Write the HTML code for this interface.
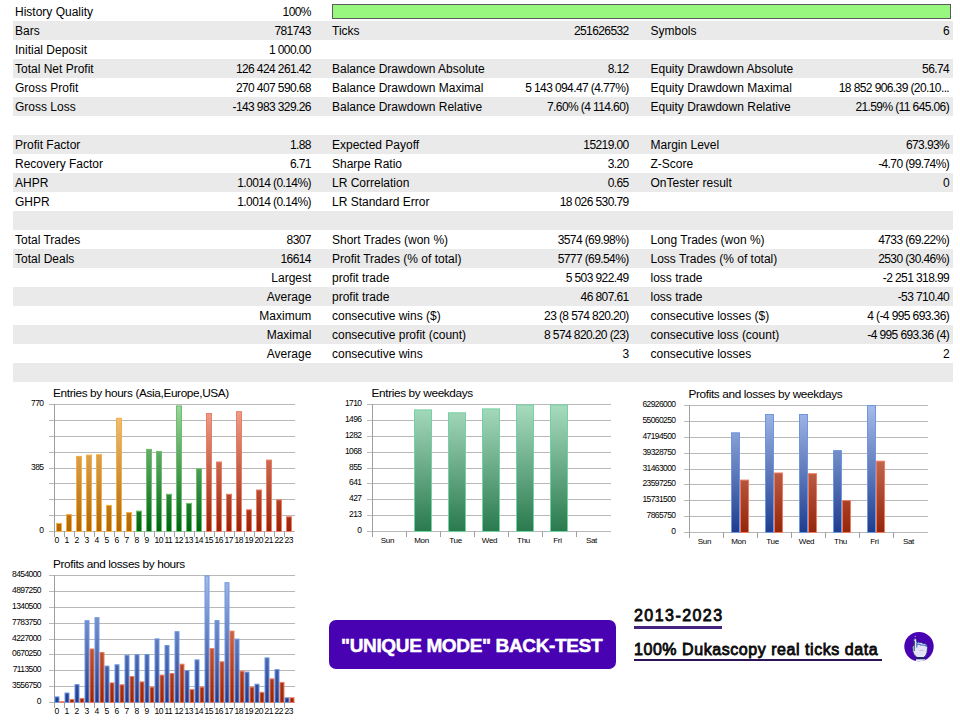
<!DOCTYPE html>
<html><head><meta charset="utf-8"><style>
html,body{margin:0;padding:0;background:#fff;}
body{width:960px;height:720px;position:relative;overflow:hidden;font-family:"Liberation Sans",sans-serif;color:#000;}
.r{position:absolute;left:13px;width:940px;height:19px;}
.g{background:#eaeaea;}
.l,.v{position:absolute;top:0;height:19px;line-height:19px;font-size:12px;white-space:nowrap;}
.v{letter-spacing:-0.6px;}
.w{letter-spacing:0;}
svg{position:absolute;left:0;top:0;}
</style></head><body>

<div class="r" style="top:2px"></div>
<div class="r g" style="top:21px"></div>
<div class="r" style="top:40px"></div>
<div class="r g" style="top:59px"></div>
<div class="r" style="top:78px"></div>
<div class="r g" style="top:97px"></div>
<div class="r" style="top:116px"></div>
<div class="r g" style="top:135px"></div>
<div class="r" style="top:154px"></div>
<div class="r g" style="top:173px"></div>
<div class="r" style="top:192px"></div>
<div class="r g" style="top:211px"></div>
<div class="r" style="top:230px"></div>
<div class="r g" style="top:249px"></div>
<div class="r" style="top:268px"></div>
<div class="r g" style="top:287px"></div>
<div class="r" style="top:306px"></div>
<div class="r g" style="top:325px"></div>
<div class="r" style="top:344px"></div>
<div class="r g" style="top:363px"></div>
<div class="l" style="top:3px;left:15px">History Quality</div>
<div class="v" style="top:3px;right:649.1px">100%</div>
<div class="l" style="top:22px;left:15px">Bars</div>
<div class="v" style="top:22px;right:649.1px">781743</div>
<div class="l" style="top:22px;left:332px">Ticks</div>
<div class="v" style="top:22px;right:331.4px">251626532</div>
<div class="l" style="top:22px;left:650.5px">Symbols</div>
<div class="v" style="top:22px;right:10.9px">6</div>
<div class="l" style="top:41px;left:15px">Initial Deposit</div>
<div class="v" style="top:41px;right:649.1px">1 000.00</div>
<div class="l" style="top:60px;left:15px">Total Net Profit</div>
<div class="v" style="top:60px;right:649.1px">126 424 261.42</div>
<div class="l" style="top:60px;left:332px">Balance Drawdown Absolute</div>
<div class="v" style="top:60px;right:331.4px">8.12</div>
<div class="l" style="top:60px;left:650.5px">Equity Drawdown Absolute</div>
<div class="v" style="top:60px;right:10.9px">56.74</div>
<div class="l" style="top:79px;left:15px">Gross Profit</div>
<div class="v" style="top:79px;right:649.1px">270 407 590.68</div>
<div class="l" style="top:79px;left:332px">Balance Drawdown Maximal</div>
<div class="v" style="top:79px;right:331.4px">5 143 094.47 (4.77%)</div>
<div class="l" style="top:79px;left:650.5px">Equity Drawdown Maximal</div>
<div class="v" style="top:79px;right:10.9px">18 852 906.39 (20.10...</div>
<div class="l" style="top:98px;left:15px">Gross Loss</div>
<div class="v" style="top:98px;right:649.1px">-143 983 329.26</div>
<div class="l" style="top:98px;left:332px">Balance Drawdown Relative</div>
<div class="v" style="top:98px;right:331.4px">7.60% (4 114.60)</div>
<div class="l" style="top:98px;left:650.5px">Equity Drawdown Relative</div>
<div class="v" style="top:98px;right:10.9px">21.59% (11 645.06)</div>
<div class="l" style="top:136px;left:15px">Profit Factor</div>
<div class="v" style="top:136px;right:649.1px">1.88</div>
<div class="l" style="top:136px;left:332px">Expected Payoff</div>
<div class="v" style="top:136px;right:331.4px">15219.00</div>
<div class="l" style="top:136px;left:650.5px">Margin Level</div>
<div class="v" style="top:136px;right:10.9px">673.93%</div>
<div class="l" style="top:155px;left:15px">Recovery Factor</div>
<div class="v" style="top:155px;right:649.1px">6.71</div>
<div class="l" style="top:155px;left:332px">Sharpe Ratio</div>
<div class="v" style="top:155px;right:331.4px">3.20</div>
<div class="l" style="top:155px;left:650.5px">Z-Score</div>
<div class="v" style="top:155px;right:10.9px">-4.70 (99.74%)</div>
<div class="l" style="top:174px;left:15px">AHPR</div>
<div class="v" style="top:174px;right:649.1px">1.0014 (0.14%)</div>
<div class="l" style="top:174px;left:332px">LR Correlation</div>
<div class="v" style="top:174px;right:331.4px">0.65</div>
<div class="l" style="top:174px;left:650.5px">OnTester result</div>
<div class="v" style="top:174px;right:10.9px">0</div>
<div class="l" style="top:193px;left:15px">GHPR</div>
<div class="v" style="top:193px;right:649.1px">1.0014 (0.14%)</div>
<div class="l" style="top:193px;left:332px">LR Standard Error</div>
<div class="v" style="top:193px;right:331.4px">18 026 530.79</div>
<div class="l" style="top:231px;left:15px">Total Trades</div>
<div class="v" style="top:231px;right:649.1px">8307</div>
<div class="l" style="top:231px;left:332px">Short Trades (won %)</div>
<div class="v" style="top:231px;right:331.4px">3574 (69.98%)</div>
<div class="l" style="top:231px;left:650.5px">Long Trades (won %)</div>
<div class="v" style="top:231px;right:10.9px">4733 (69.22%)</div>
<div class="l" style="top:250px;left:15px">Total Deals</div>
<div class="v" style="top:250px;right:649.1px">16614</div>
<div class="l" style="top:250px;left:332px">Profit Trades (% of total)</div>
<div class="v" style="top:250px;right:331.4px">5777 (69.54%)</div>
<div class="l" style="top:250px;left:650.5px">Loss Trades (% of total)</div>
<div class="v" style="top:250px;right:10.9px">2530 (30.46%)</div>
<div class="l" style="top:269px;right:648.7px">Largest</div>
<div class="l" style="top:269px;left:332px">profit trade</div>
<div class="v" style="top:269px;right:331.4px">5 503 922.49</div>
<div class="l" style="top:269px;left:650.5px">loss trade</div>
<div class="v" style="top:269px;right:10.9px">-2 251 318.99</div>
<div class="l" style="top:288px;right:648.7px">Average</div>
<div class="l" style="top:288px;left:332px">profit trade</div>
<div class="v" style="top:288px;right:331.4px">46 807.61</div>
<div class="l" style="top:288px;left:650.5px">loss trade</div>
<div class="v" style="top:288px;right:10.9px">-53 710.40</div>
<div class="l" style="top:307px;right:648.7px">Maximum</div>
<div class="l" style="top:307px;left:332px">consecutive wins ($)</div>
<div class="v" style="top:307px;right:331.4px">23 (8 574 820.20)</div>
<div class="l" style="top:307px;left:650.5px">consecutive losses ($)</div>
<div class="v" style="top:307px;right:10.9px">4 (-4 995 693.36)</div>
<div class="l" style="top:326px;right:648.7px">Maximal</div>
<div class="l" style="top:326px;left:332px">consecutive profit (count)</div>
<div class="v" style="top:326px;right:331.4px">8 574 820.20 (23)</div>
<div class="l" style="top:326px;left:650.5px">consecutive loss (count)</div>
<div class="v" style="top:326px;right:10.9px">-4 995 693.36 (4)</div>
<div class="l" style="top:345px;right:648.7px">Average</div>
<div class="l" style="top:345px;left:332px">consecutive wins</div>
<div class="v" style="top:345px;right:331.4px">3</div>
<div class="l" style="top:345px;left:650.5px">consecutive losses</div>
<div class="v" style="top:345px;right:10.9px">2</div>
<div style="position:absolute;left:332px;top:4px;width:617px;height:13px;border:1px solid #5b5b5b;background:#98f77e"></div>
<svg width="960" height="720" viewBox="0 0 960 720" style="font-family:'Liberation Sans',sans-serif">
<defs>
<linearGradient id="gO" gradientUnits="userSpaceOnUse" x1="0" y1="404" x2="0" y2="531"><stop offset="0" stop-color="#f2c98a"/><stop offset="1" stop-color="#ad6808"/></linearGradient>
<linearGradient id="gG" gradientUnits="userSpaceOnUse" x1="0" y1="404" x2="0" y2="531"><stop offset="0" stop-color="#9fd69f"/><stop offset="1" stop-color="#006414"/></linearGradient>
<linearGradient id="gR" gradientUnits="userSpaceOnUse" x1="0" y1="404" x2="0" y2="531"><stop offset="0" stop-color="#f0a694"/><stop offset="1" stop-color="#962408"/></linearGradient>
<linearGradient id="gT" gradientUnits="userSpaceOnUse" x1="0" y1="404" x2="0" y2="531"><stop offset="0" stop-color="#a9dcc0"/><stop offset="1" stop-color="#2a7a4e"/></linearGradient>
<linearGradient id="gB3" gradientUnits="userSpaceOnUse" x1="0" y1="405" x2="0" y2="532"><stop offset="0" stop-color="#a6bceb"/><stop offset="1" stop-color="#1f3d8f"/></linearGradient>
<linearGradient id="gR3" gradientUnits="userSpaceOnUse" x1="0" y1="405" x2="0" y2="532"><stop offset="0" stop-color="#e49a86"/><stop offset="1" stop-color="#94260a"/></linearGradient>
<linearGradient id="gB4" gradientUnits="userSpaceOnUse" x1="0" y1="575" x2="0" y2="702"><stop offset="0" stop-color="#a6bceb"/><stop offset="1" stop-color="#1f3d8f"/></linearGradient>
<linearGradient id="gR4" gradientUnits="userSpaceOnUse" x1="0" y1="575" x2="0" y2="702"><stop offset="0" stop-color="#e49a86"/><stop offset="1" stop-color="#94260a"/></linearGradient>
<clipPath id="clip4"><rect x="12.5" y="560" width="300" height="160"/></clipPath>
</defs>
<text x="53" y="396.5" font-size="11.8" letter-spacing="-0.36" fill="#000">Entries by hours (Asia,Europe,USA)</text>
<line x1="49" y1="404.5" x2="295" y2="404.5" stroke="#b8b8b8" stroke-width="1"/>
<line x1="49" y1="420.5" x2="295" y2="420.5" stroke="#b8b8b8" stroke-width="1"/>
<line x1="49" y1="436.5" x2="295" y2="436.5" stroke="#b8b8b8" stroke-width="1"/>
<line x1="49" y1="452.5" x2="295" y2="452.5" stroke="#b8b8b8" stroke-width="1"/>
<line x1="49" y1="468.5" x2="295" y2="468.5" stroke="#b8b8b8" stroke-width="1"/>
<line x1="49" y1="483.5" x2="295" y2="483.5" stroke="#b8b8b8" stroke-width="1"/>
<line x1="49" y1="499.5" x2="295" y2="499.5" stroke="#b8b8b8" stroke-width="1"/>
<line x1="49" y1="515.5" x2="295" y2="515.5" stroke="#b8b8b8" stroke-width="1"/>
<line x1="49" y1="531.5" x2="295" y2="531.5" stroke="#b8b8b8" stroke-width="1"/>
<line x1="54.5" y1="404" x2="54.5" y2="537" stroke="#a0a0a0" stroke-width="1"/>
<line x1="64.5" y1="531" x2="64.5" y2="537" stroke="#a0a0a0" stroke-width="1"/>
<line x1="74.5" y1="531" x2="74.5" y2="537" stroke="#a0a0a0" stroke-width="1"/>
<line x1="84.5" y1="531" x2="84.5" y2="537" stroke="#a0a0a0" stroke-width="1"/>
<line x1="94.5" y1="531" x2="94.5" y2="537" stroke="#a0a0a0" stroke-width="1"/>
<line x1="104.5" y1="531" x2="104.5" y2="537" stroke="#a0a0a0" stroke-width="1"/>
<line x1="114.5" y1="531" x2="114.5" y2="537" stroke="#a0a0a0" stroke-width="1"/>
<line x1="124.5" y1="531" x2="124.5" y2="537" stroke="#a0a0a0" stroke-width="1"/>
<line x1="134.5" y1="531" x2="134.5" y2="537" stroke="#a0a0a0" stroke-width="1"/>
<line x1="144.5" y1="531" x2="144.5" y2="537" stroke="#a0a0a0" stroke-width="1"/>
<line x1="154.5" y1="531" x2="154.5" y2="537" stroke="#a0a0a0" stroke-width="1"/>
<line x1="164.5" y1="531" x2="164.5" y2="537" stroke="#a0a0a0" stroke-width="1"/>
<line x1="174.5" y1="531" x2="174.5" y2="537" stroke="#a0a0a0" stroke-width="1"/>
<line x1="184.5" y1="531" x2="184.5" y2="537" stroke="#a0a0a0" stroke-width="1"/>
<line x1="194.5" y1="531" x2="194.5" y2="537" stroke="#a0a0a0" stroke-width="1"/>
<line x1="204.5" y1="531" x2="204.5" y2="537" stroke="#a0a0a0" stroke-width="1"/>
<line x1="214.5" y1="531" x2="214.5" y2="537" stroke="#a0a0a0" stroke-width="1"/>
<line x1="224.5" y1="531" x2="224.5" y2="537" stroke="#a0a0a0" stroke-width="1"/>
<line x1="234.5" y1="531" x2="234.5" y2="537" stroke="#a0a0a0" stroke-width="1"/>
<line x1="244.5" y1="531" x2="244.5" y2="537" stroke="#a0a0a0" stroke-width="1"/>
<line x1="254.5" y1="531" x2="254.5" y2="537" stroke="#a0a0a0" stroke-width="1"/>
<line x1="264.5" y1="531" x2="264.5" y2="537" stroke="#a0a0a0" stroke-width="1"/>
<line x1="274.5" y1="531" x2="274.5" y2="537" stroke="#a0a0a0" stroke-width="1"/>
<line x1="284.5" y1="531" x2="284.5" y2="537" stroke="#a0a0a0" stroke-width="1"/>
<g>
<text x="43.5" y="406.0" font-size="8.5" letter-spacing="-0.6" text-anchor="end" fill="#000">770</text>
<text x="43.5" y="422.0" font-size="8.5" letter-spacing="-0.6" text-anchor="end" fill="#000"></text>
<text x="43.5" y="438.0" font-size="8.5" letter-spacing="-0.6" text-anchor="end" fill="#000"></text>
<text x="43.5" y="454.0" font-size="8.5" letter-spacing="-0.6" text-anchor="end" fill="#000"></text>
<text x="43.5" y="470.0" font-size="8.5" letter-spacing="-0.6" text-anchor="end" fill="#000">385</text>
<text x="43.5" y="485.0" font-size="8.5" letter-spacing="-0.6" text-anchor="end" fill="#000"></text>
<text x="43.5" y="501.0" font-size="8.5" letter-spacing="-0.6" text-anchor="end" fill="#000"></text>
<text x="43.5" y="517.0" font-size="8.5" letter-spacing="-0.6" text-anchor="end" fill="#000"></text>
<text x="43.5" y="533.0" font-size="8.5" letter-spacing="-0.6" text-anchor="end" fill="#000">0</text>
</g>
<rect x="56.5" y="523.5" width="5" height="8.0" fill="url(#gO)" stroke="#f9ad3e" stroke-width="1"/>
<rect x="66.5" y="514.6" width="5" height="16.9" fill="url(#gO)" stroke="#f9ad3e" stroke-width="1"/>
<rect x="76.5" y="456.4" width="5" height="75.1" fill="url(#gO)" stroke="#f9ad3e" stroke-width="1"/>
<rect x="86.5" y="455.1" width="5" height="76.4" fill="url(#gO)" stroke="#f9ad3e" stroke-width="1"/>
<rect x="96.5" y="454.7" width="5" height="76.8" fill="url(#gO)" stroke="#f9ad3e" stroke-width="1"/>
<rect x="106.5" y="505.4" width="5" height="26.1" fill="url(#gO)" stroke="#f9ad3e" stroke-width="1"/>
<rect x="116.5" y="418.3" width="5" height="113.2" fill="url(#gO)" stroke="#f9ad3e" stroke-width="1"/>
<rect x="126.5" y="512.6" width="5" height="18.9" fill="url(#gO)" stroke="#f9ad3e" stroke-width="1"/>
<rect x="136.5" y="511.1" width="5" height="20.4" fill="url(#gG)" stroke="#6cc06c" stroke-width="1"/>
<rect x="146.5" y="449.4" width="5" height="82.1" fill="url(#gG)" stroke="#6cc06c" stroke-width="1"/>
<rect x="156.5" y="451.4" width="5" height="80.1" fill="url(#gG)" stroke="#6cc06c" stroke-width="1"/>
<rect x="166.5" y="494.3" width="5" height="37.2" fill="url(#gG)" stroke="#6cc06c" stroke-width="1"/>
<rect x="176.5" y="405.9" width="5" height="125.6" fill="url(#gG)" stroke="#6cc06c" stroke-width="1"/>
<rect x="186.5" y="503.4" width="5" height="28.1" fill="url(#gG)" stroke="#6cc06c" stroke-width="1"/>
<rect x="196.5" y="468.8" width="5" height="62.7" fill="url(#gG)" stroke="#6cc06c" stroke-width="1"/>
<rect x="206.5" y="413.5" width="5" height="118.0" fill="url(#gR)" stroke="#ee7b62" stroke-width="1"/>
<rect x="216.5" y="462.0" width="5" height="69.5" fill="url(#gR)" stroke="#ee7b62" stroke-width="1"/>
<rect x="226.5" y="494.3" width="5" height="37.2" fill="url(#gR)" stroke="#ee7b62" stroke-width="1"/>
<rect x="236.5" y="411.7" width="5" height="119.8" fill="url(#gR)" stroke="#ee7b62" stroke-width="1"/>
<rect x="246.5" y="509.8" width="5" height="21.7" fill="url(#gR)" stroke="#ee7b62" stroke-width="1"/>
<rect x="256.5" y="490.0" width="5" height="41.5" fill="url(#gR)" stroke="#ee7b62" stroke-width="1"/>
<rect x="266.5" y="460.1" width="5" height="71.4" fill="url(#gR)" stroke="#ee7b62" stroke-width="1"/>
<rect x="276.5" y="499.9" width="5" height="31.6" fill="url(#gR)" stroke="#ee7b62" stroke-width="1"/>
<rect x="286.5" y="516.8" width="5" height="14.7" fill="url(#gR)" stroke="#ee7b62" stroke-width="1"/>
<text x="54.6" y="542.8" font-size="8.5" letter-spacing="-0.6" fill="#000">0</text>
<text x="64.6" y="542.8" font-size="8.5" letter-spacing="-0.6" fill="#000">1</text>
<text x="74.6" y="542.8" font-size="8.5" letter-spacing="-0.6" fill="#000">2</text>
<text x="84.6" y="542.8" font-size="8.5" letter-spacing="-0.6" fill="#000">3</text>
<text x="94.6" y="542.8" font-size="8.5" letter-spacing="-0.6" fill="#000">4</text>
<text x="104.6" y="542.8" font-size="8.5" letter-spacing="-0.6" fill="#000">5</text>
<text x="114.6" y="542.8" font-size="8.5" letter-spacing="-0.6" fill="#000">6</text>
<text x="124.6" y="542.8" font-size="8.5" letter-spacing="-0.6" fill="#000">7</text>
<text x="134.6" y="542.8" font-size="8.5" letter-spacing="-0.6" fill="#000">8</text>
<text x="144.6" y="542.8" font-size="8.5" letter-spacing="-0.6" fill="#000">9</text>
<text x="154.6" y="542.8" font-size="8.5" letter-spacing="-0.6" fill="#000">10</text>
<text x="164.6" y="542.8" font-size="8.5" letter-spacing="-0.6" fill="#000">11</text>
<text x="174.6" y="542.8" font-size="8.5" letter-spacing="-0.6" fill="#000">12</text>
<text x="184.6" y="542.8" font-size="8.5" letter-spacing="-0.6" fill="#000">13</text>
<text x="194.6" y="542.8" font-size="8.5" letter-spacing="-0.6" fill="#000">14</text>
<text x="204.6" y="542.8" font-size="8.5" letter-spacing="-0.6" fill="#000">15</text>
<text x="214.6" y="542.8" font-size="8.5" letter-spacing="-0.6" fill="#000">16</text>
<text x="224.6" y="542.8" font-size="8.5" letter-spacing="-0.6" fill="#000">17</text>
<text x="234.6" y="542.8" font-size="8.5" letter-spacing="-0.6" fill="#000">18</text>
<text x="244.6" y="542.8" font-size="8.5" letter-spacing="-0.6" fill="#000">19</text>
<text x="254.6" y="542.8" font-size="8.5" letter-spacing="-0.6" fill="#000">20</text>
<text x="264.6" y="542.8" font-size="8.5" letter-spacing="-0.6" fill="#000">21</text>
<text x="274.6" y="542.8" font-size="8.5" letter-spacing="-0.6" fill="#000">22</text>
<text x="284.6" y="542.8" font-size="8.5" letter-spacing="-0.6" fill="#000">23</text>
<text x="371.5" y="396.5" font-size="11.8" letter-spacing="-0.36" fill="#000">Entries by weekdays</text>
<line x1="367" y1="404.5" x2="611" y2="404.5" stroke="#b8b8b8" stroke-width="1"/>
<line x1="367" y1="420.5" x2="611" y2="420.5" stroke="#b8b8b8" stroke-width="1"/>
<line x1="367" y1="436.5" x2="611" y2="436.5" stroke="#b8b8b8" stroke-width="1"/>
<line x1="367" y1="452.5" x2="611" y2="452.5" stroke="#b8b8b8" stroke-width="1"/>
<line x1="367" y1="468.5" x2="611" y2="468.5" stroke="#b8b8b8" stroke-width="1"/>
<line x1="367" y1="483.5" x2="611" y2="483.5" stroke="#b8b8b8" stroke-width="1"/>
<line x1="367" y1="499.5" x2="611" y2="499.5" stroke="#b8b8b8" stroke-width="1"/>
<line x1="367" y1="515.5" x2="611" y2="515.5" stroke="#b8b8b8" stroke-width="1"/>
<line x1="367" y1="531.5" x2="611" y2="531.5" stroke="#b8b8b8" stroke-width="1"/>
<line x1="372.5" y1="404" x2="372.5" y2="537" stroke="#a0a0a0" stroke-width="1"/>
<line x1="406.5" y1="531" x2="406.5" y2="537" stroke="#a0a0a0" stroke-width="1"/>
<line x1="440.5" y1="531" x2="440.5" y2="537" stroke="#a0a0a0" stroke-width="1"/>
<line x1="474.5" y1="531" x2="474.5" y2="537" stroke="#a0a0a0" stroke-width="1"/>
<line x1="508.5" y1="531" x2="508.5" y2="537" stroke="#a0a0a0" stroke-width="1"/>
<line x1="542.5" y1="531" x2="542.5" y2="537" stroke="#a0a0a0" stroke-width="1"/>
<line x1="576.5" y1="531" x2="576.5" y2="537" stroke="#a0a0a0" stroke-width="1"/>
<g>
<text x="361.5" y="406.0" font-size="8.5" letter-spacing="-0.6" text-anchor="end" fill="#000">1710</text>
<text x="361.5" y="422.0" font-size="8.5" letter-spacing="-0.6" text-anchor="end" fill="#000">1496</text>
<text x="361.5" y="438.0" font-size="8.5" letter-spacing="-0.6" text-anchor="end" fill="#000">1282</text>
<text x="361.5" y="454.0" font-size="8.5" letter-spacing="-0.6" text-anchor="end" fill="#000">1068</text>
<text x="361.5" y="470.0" font-size="8.5" letter-spacing="-0.6" text-anchor="end" fill="#000">855</text>
<text x="361.5" y="485.0" font-size="8.5" letter-spacing="-0.6" text-anchor="end" fill="#000">641</text>
<text x="361.5" y="501.0" font-size="8.5" letter-spacing="-0.6" text-anchor="end" fill="#000">427</text>
<text x="361.5" y="517.0" font-size="8.5" letter-spacing="-0.6" text-anchor="end" fill="#000">213</text>
<text x="361.5" y="533.0" font-size="8.5" letter-spacing="-0.6" text-anchor="end" fill="#000">0</text>
</g>
<rect x="414.5" y="409.9" width="17" height="121.6" fill="url(#gT)" stroke="#74d2a2" stroke-width="1"/>
<rect x="448.5" y="412.8" width="17" height="118.8" fill="url(#gT)" stroke="#74d2a2" stroke-width="1"/>
<rect x="482.5" y="408.9" width="17" height="122.6" fill="url(#gT)" stroke="#74d2a2" stroke-width="1"/>
<rect x="516.5" y="405.0" width="17" height="126.5" fill="url(#gT)" stroke="#74d2a2" stroke-width="1"/>
<rect x="550.5" y="405.0" width="17" height="126.5" fill="url(#gT)" stroke="#74d2a2" stroke-width="1"/>
<text x="387.5" y="542.8" font-size="8" letter-spacing="-0.3" text-anchor="middle" fill="#000">Sun</text>
<text x="421.5" y="542.8" font-size="8" letter-spacing="-0.3" text-anchor="middle" fill="#000">Mon</text>
<text x="455.5" y="542.8" font-size="8" letter-spacing="-0.3" text-anchor="middle" fill="#000">Tue</text>
<text x="489.5" y="542.8" font-size="8" letter-spacing="-0.3" text-anchor="middle" fill="#000">Wed</text>
<text x="523.5" y="542.8" font-size="8" letter-spacing="-0.3" text-anchor="middle" fill="#000">Thu</text>
<text x="557.5" y="542.8" font-size="8" letter-spacing="-0.3" text-anchor="middle" fill="#000">Fri</text>
<text x="591.5" y="542.8" font-size="8" letter-spacing="-0.3" text-anchor="middle" fill="#000">Sat</text>
<text x="688.5" y="397.7" font-size="11.8" letter-spacing="-0.36" fill="#000">Profits and losses by weekdays</text>
<line x1="684" y1="405.5" x2="928" y2="405.5" stroke="#b8b8b8" stroke-width="1"/>
<line x1="684" y1="421.5" x2="928" y2="421.5" stroke="#b8b8b8" stroke-width="1"/>
<line x1="684" y1="437.5" x2="928" y2="437.5" stroke="#b8b8b8" stroke-width="1"/>
<line x1="684" y1="453.5" x2="928" y2="453.5" stroke="#b8b8b8" stroke-width="1"/>
<line x1="684" y1="469.5" x2="928" y2="469.5" stroke="#b8b8b8" stroke-width="1"/>
<line x1="684" y1="484.5" x2="928" y2="484.5" stroke="#b8b8b8" stroke-width="1"/>
<line x1="684" y1="500.5" x2="928" y2="500.5" stroke="#b8b8b8" stroke-width="1"/>
<line x1="684" y1="516.5" x2="928" y2="516.5" stroke="#b8b8b8" stroke-width="1"/>
<line x1="684" y1="532.5" x2="928" y2="532.5" stroke="#b8b8b8" stroke-width="1"/>
<line x1="689.5" y1="405" x2="689.5" y2="538" stroke="#a0a0a0" stroke-width="1"/>
<line x1="723.5" y1="532" x2="723.5" y2="538" stroke="#a0a0a0" stroke-width="1"/>
<line x1="757.5" y1="532" x2="757.5" y2="538" stroke="#a0a0a0" stroke-width="1"/>
<line x1="791.5" y1="532" x2="791.5" y2="538" stroke="#a0a0a0" stroke-width="1"/>
<line x1="825.5" y1="532" x2="825.5" y2="538" stroke="#a0a0a0" stroke-width="1"/>
<line x1="859.5" y1="532" x2="859.5" y2="538" stroke="#a0a0a0" stroke-width="1"/>
<line x1="893.5" y1="532" x2="893.5" y2="538" stroke="#a0a0a0" stroke-width="1"/>
<g>
<text x="675.5" y="407.0" font-size="8.5" letter-spacing="-0.6" text-anchor="end" fill="#000">62926000</text>
<text x="675.5" y="423.0" font-size="8.5" letter-spacing="-0.6" text-anchor="end" fill="#000">55060250</text>
<text x="675.5" y="439.0" font-size="8.5" letter-spacing="-0.6" text-anchor="end" fill="#000">47194500</text>
<text x="675.5" y="455.0" font-size="8.5" letter-spacing="-0.6" text-anchor="end" fill="#000">39328750</text>
<text x="675.5" y="471.0" font-size="8.5" letter-spacing="-0.6" text-anchor="end" fill="#000">31463000</text>
<text x="675.5" y="486.0" font-size="8.5" letter-spacing="-0.6" text-anchor="end" fill="#000">23597250</text>
<text x="675.5" y="502.0" font-size="8.5" letter-spacing="-0.6" text-anchor="end" fill="#000">15731500</text>
<text x="675.5" y="518.0" font-size="8.5" letter-spacing="-0.6" text-anchor="end" fill="#000">7865750</text>
<text x="675.5" y="534.0" font-size="8.5" letter-spacing="-0.6" text-anchor="end" fill="#000">0</text>
</g>
<rect x="731.5" y="432.8" width="8" height="99.7" fill="url(#gB3)" stroke="#6e97e2" stroke-width="1"/>
<rect x="740.5" y="480.1" width="8" height="52.4" fill="url(#gR3)" stroke="#f07a5c" stroke-width="1"/>
<rect x="765.5" y="414.5" width="8" height="118.0" fill="url(#gB3)" stroke="#6e97e2" stroke-width="1"/>
<rect x="774.5" y="473.0" width="8" height="59.5" fill="url(#gR3)" stroke="#f07a5c" stroke-width="1"/>
<rect x="799.5" y="414.5" width="8" height="118.0" fill="url(#gB3)" stroke="#6e97e2" stroke-width="1"/>
<rect x="808.5" y="473.7" width="8" height="58.8" fill="url(#gR3)" stroke="#f07a5c" stroke-width="1"/>
<rect x="833.5" y="450.6" width="8" height="81.9" fill="url(#gB3)" stroke="#6e97e2" stroke-width="1"/>
<rect x="842.5" y="500.6" width="8" height="31.9" fill="url(#gR3)" stroke="#f07a5c" stroke-width="1"/>
<rect x="867.5" y="405.6" width="8" height="126.9" fill="url(#gB3)" stroke="#6e97e2" stroke-width="1"/>
<rect x="876.5" y="461.2" width="8" height="71.3" fill="url(#gR3)" stroke="#f07a5c" stroke-width="1"/>
<text x="704.5" y="543.8" font-size="8" letter-spacing="-0.3" text-anchor="middle" fill="#000">Sun</text>
<text x="738.5" y="543.8" font-size="8" letter-spacing="-0.3" text-anchor="middle" fill="#000">Mon</text>
<text x="772.5" y="543.8" font-size="8" letter-spacing="-0.3" text-anchor="middle" fill="#000">Tue</text>
<text x="806.5" y="543.8" font-size="8" letter-spacing="-0.3" text-anchor="middle" fill="#000">Wed</text>
<text x="840.5" y="543.8" font-size="8" letter-spacing="-0.3" text-anchor="middle" fill="#000">Thu</text>
<text x="874.5" y="543.8" font-size="8" letter-spacing="-0.3" text-anchor="middle" fill="#000">Fri</text>
<text x="908.5" y="543.8" font-size="8" letter-spacing="-0.3" text-anchor="middle" fill="#000">Sat</text>
<text x="53" y="567.5" font-size="11.8" letter-spacing="-0.36" fill="#000">Profits and losses by hours</text>
<line x1="49" y1="575.5" x2="295" y2="575.5" stroke="#b8b8b8" stroke-width="1"/>
<line x1="49" y1="591.5" x2="295" y2="591.5" stroke="#b8b8b8" stroke-width="1"/>
<line x1="49" y1="607.5" x2="295" y2="607.5" stroke="#b8b8b8" stroke-width="1"/>
<line x1="49" y1="623.5" x2="295" y2="623.5" stroke="#b8b8b8" stroke-width="1"/>
<line x1="49" y1="639.5" x2="295" y2="639.5" stroke="#b8b8b8" stroke-width="1"/>
<line x1="49" y1="654.5" x2="295" y2="654.5" stroke="#b8b8b8" stroke-width="1"/>
<line x1="49" y1="670.5" x2="295" y2="670.5" stroke="#b8b8b8" stroke-width="1"/>
<line x1="49" y1="686.5" x2="295" y2="686.5" stroke="#b8b8b8" stroke-width="1"/>
<line x1="49" y1="702.5" x2="295" y2="702.5" stroke="#b8b8b8" stroke-width="1"/>
<line x1="54.5" y1="575" x2="54.5" y2="708" stroke="#a0a0a0" stroke-width="1"/>
<line x1="64.5" y1="702" x2="64.5" y2="708" stroke="#a0a0a0" stroke-width="1"/>
<line x1="74.5" y1="702" x2="74.5" y2="708" stroke="#a0a0a0" stroke-width="1"/>
<line x1="84.5" y1="702" x2="84.5" y2="708" stroke="#a0a0a0" stroke-width="1"/>
<line x1="94.5" y1="702" x2="94.5" y2="708" stroke="#a0a0a0" stroke-width="1"/>
<line x1="104.5" y1="702" x2="104.5" y2="708" stroke="#a0a0a0" stroke-width="1"/>
<line x1="114.5" y1="702" x2="114.5" y2="708" stroke="#a0a0a0" stroke-width="1"/>
<line x1="124.5" y1="702" x2="124.5" y2="708" stroke="#a0a0a0" stroke-width="1"/>
<line x1="134.5" y1="702" x2="134.5" y2="708" stroke="#a0a0a0" stroke-width="1"/>
<line x1="144.5" y1="702" x2="144.5" y2="708" stroke="#a0a0a0" stroke-width="1"/>
<line x1="154.5" y1="702" x2="154.5" y2="708" stroke="#a0a0a0" stroke-width="1"/>
<line x1="164.5" y1="702" x2="164.5" y2="708" stroke="#a0a0a0" stroke-width="1"/>
<line x1="174.5" y1="702" x2="174.5" y2="708" stroke="#a0a0a0" stroke-width="1"/>
<line x1="184.5" y1="702" x2="184.5" y2="708" stroke="#a0a0a0" stroke-width="1"/>
<line x1="194.5" y1="702" x2="194.5" y2="708" stroke="#a0a0a0" stroke-width="1"/>
<line x1="204.5" y1="702" x2="204.5" y2="708" stroke="#a0a0a0" stroke-width="1"/>
<line x1="214.5" y1="702" x2="214.5" y2="708" stroke="#a0a0a0" stroke-width="1"/>
<line x1="224.5" y1="702" x2="224.5" y2="708" stroke="#a0a0a0" stroke-width="1"/>
<line x1="234.5" y1="702" x2="234.5" y2="708" stroke="#a0a0a0" stroke-width="1"/>
<line x1="244.5" y1="702" x2="244.5" y2="708" stroke="#a0a0a0" stroke-width="1"/>
<line x1="254.5" y1="702" x2="254.5" y2="708" stroke="#a0a0a0" stroke-width="1"/>
<line x1="264.5" y1="702" x2="264.5" y2="708" stroke="#a0a0a0" stroke-width="1"/>
<line x1="274.5" y1="702" x2="274.5" y2="708" stroke="#a0a0a0" stroke-width="1"/>
<line x1="284.5" y1="702" x2="284.5" y2="708" stroke="#a0a0a0" stroke-width="1"/>
<g>
<text x="41" y="577.0" font-size="8.5" letter-spacing="-0.6" text-anchor="end" fill="#000">8454000</text>
<text x="41" y="593.0" font-size="8.5" letter-spacing="-0.6" text-anchor="end" fill="#000">4897250</text>
<text x="41" y="609.0" font-size="8.5" letter-spacing="-0.6" text-anchor="end" fill="#000">1340500</text>
<text x="41" y="625.0" font-size="8.5" letter-spacing="-0.6" text-anchor="end" fill="#000">7783750</text>
<text x="41" y="641.0" font-size="8.5" letter-spacing="-0.6" text-anchor="end" fill="#000">4227000</text>
<text x="41" y="656.0" font-size="8.5" letter-spacing="-0.6" text-anchor="end" fill="#000">0670250</text>
<text x="41" y="672.0" font-size="8.5" letter-spacing="-0.6" text-anchor="end" fill="#000">7113500</text>
<text x="41" y="688.0" font-size="8.5" letter-spacing="-0.6" text-anchor="end" fill="#000">3556750</text>
<text x="41" y="704.0" font-size="8.5" letter-spacing="-0.6" text-anchor="end" fill="#000">0</text>
</g>
<rect x="55.0" y="696.9" width="4" height="5.6" fill="url(#gB4)" stroke="#6e97e2" stroke-width="1"/>
<rect x="60.0" y="701.7" width="4" height="0.8" fill="url(#gR4)" stroke="#f07a5c" stroke-width="1"/>
<rect x="65.0" y="693.0" width="4" height="9.5" fill="url(#gB4)" stroke="#6e97e2" stroke-width="1"/>
<rect x="70.0" y="699.4" width="4" height="3.1" fill="url(#gR4)" stroke="#f07a5c" stroke-width="1"/>
<rect x="75.0" y="684.6" width="4" height="17.9" fill="url(#gB4)" stroke="#6e97e2" stroke-width="1"/>
<rect x="80.0" y="698.4" width="4" height="4.1" fill="url(#gR4)" stroke="#f07a5c" stroke-width="1"/>
<rect x="85.0" y="620.7" width="4" height="81.8" fill="url(#gB4)" stroke="#6e97e2" stroke-width="1"/>
<rect x="90.0" y="649.0" width="4" height="53.5" fill="url(#gR4)" stroke="#f07a5c" stroke-width="1"/>
<rect x="95.0" y="617.7" width="4" height="84.8" fill="url(#gB4)" stroke="#6e97e2" stroke-width="1"/>
<rect x="100.0" y="652.5" width="4" height="50.0" fill="url(#gR4)" stroke="#f07a5c" stroke-width="1"/>
<rect x="105.0" y="666.1" width="4" height="36.4" fill="url(#gB4)" stroke="#6e97e2" stroke-width="1"/>
<rect x="110.0" y="682.9" width="4" height="19.6" fill="url(#gR4)" stroke="#f07a5c" stroke-width="1"/>
<rect x="115.0" y="664.8" width="4" height="37.7" fill="url(#gB4)" stroke="#6e97e2" stroke-width="1"/>
<rect x="120.0" y="684.8" width="4" height="17.7" fill="url(#gR4)" stroke="#f07a5c" stroke-width="1"/>
<rect x="125.0" y="655.3" width="4" height="47.2" fill="url(#gB4)" stroke="#6e97e2" stroke-width="1"/>
<rect x="130.0" y="676.5" width="4" height="26.0" fill="url(#gR4)" stroke="#f07a5c" stroke-width="1"/>
<rect x="135.0" y="654.7" width="4" height="47.8" fill="url(#gB4)" stroke="#6e97e2" stroke-width="1"/>
<rect x="140.0" y="681.9" width="4" height="20.6" fill="url(#gR4)" stroke="#f07a5c" stroke-width="1"/>
<rect x="145.0" y="654.5" width="4" height="48.0" fill="url(#gB4)" stroke="#6e97e2" stroke-width="1"/>
<rect x="150.0" y="687.1" width="4" height="15.4" fill="url(#gR4)" stroke="#f07a5c" stroke-width="1"/>
<rect x="155.0" y="638.9" width="4" height="63.6" fill="url(#gB4)" stroke="#6e97e2" stroke-width="1"/>
<rect x="160.0" y="675.1" width="4" height="27.4" fill="url(#gR4)" stroke="#f07a5c" stroke-width="1"/>
<rect x="165.0" y="645.5" width="4" height="57.0" fill="url(#gB4)" stroke="#6e97e2" stroke-width="1"/>
<rect x="170.0" y="673.5" width="4" height="29.0" fill="url(#gR4)" stroke="#f07a5c" stroke-width="1"/>
<rect x="175.0" y="631.7" width="4" height="70.8" fill="url(#gB4)" stroke="#6e97e2" stroke-width="1"/>
<rect x="180.0" y="664.2" width="4" height="38.3" fill="url(#gR4)" stroke="#f07a5c" stroke-width="1"/>
<rect x="185.0" y="670.6" width="4" height="31.9" fill="url(#gB4)" stroke="#6e97e2" stroke-width="1"/>
<rect x="190.0" y="689.6" width="4" height="12.9" fill="url(#gR4)" stroke="#f07a5c" stroke-width="1"/>
<rect x="195.0" y="659.9" width="4" height="42.6" fill="url(#gB4)" stroke="#6e97e2" stroke-width="1"/>
<rect x="200.0" y="687.1" width="4" height="15.4" fill="url(#gR4)" stroke="#f07a5c" stroke-width="1"/>
<rect x="205.0" y="575.9" width="4" height="126.6" fill="url(#gB4)" stroke="#6e97e2" stroke-width="1"/>
<rect x="210.0" y="648.6" width="4" height="53.9" fill="url(#gR4)" stroke="#f07a5c" stroke-width="1"/>
<rect x="215.0" y="620.6" width="4" height="81.9" fill="url(#gB4)" stroke="#6e97e2" stroke-width="1"/>
<rect x="220.0" y="661.8" width="4" height="40.7" fill="url(#gR4)" stroke="#f07a5c" stroke-width="1"/>
<rect x="225.0" y="582.7" width="4" height="119.8" fill="url(#gB4)" stroke="#6e97e2" stroke-width="1"/>
<rect x="230.0" y="631.1" width="4" height="71.4" fill="url(#gR4)" stroke="#f07a5c" stroke-width="1"/>
<rect x="235.0" y="639.1" width="4" height="63.4" fill="url(#gB4)" stroke="#6e97e2" stroke-width="1"/>
<rect x="240.0" y="671.2" width="4" height="31.3" fill="url(#gR4)" stroke="#f07a5c" stroke-width="1"/>
<rect x="245.0" y="672.1" width="4" height="30.4" fill="url(#gB4)" stroke="#6e97e2" stroke-width="1"/>
<rect x="250.0" y="687.1" width="4" height="15.4" fill="url(#gR4)" stroke="#f07a5c" stroke-width="1"/>
<rect x="255.0" y="684.2" width="4" height="18.3" fill="url(#gB4)" stroke="#6e97e2" stroke-width="1"/>
<rect x="260.0" y="692.3" width="4" height="10.2" fill="url(#gR4)" stroke="#f07a5c" stroke-width="1"/>
<rect x="265.0" y="657.9" width="4" height="44.6" fill="url(#gB4)" stroke="#6e97e2" stroke-width="1"/>
<rect x="270.0" y="678.9" width="4" height="23.6" fill="url(#gR4)" stroke="#f07a5c" stroke-width="1"/>
<rect x="275.0" y="669.6" width="4" height="32.9" fill="url(#gB4)" stroke="#6e97e2" stroke-width="1"/>
<rect x="280.0" y="682.4" width="4" height="20.1" fill="url(#gR4)" stroke="#f07a5c" stroke-width="1"/>
<rect x="285.0" y="697.8" width="4" height="4.7" fill="url(#gB4)" stroke="#6e97e2" stroke-width="1"/>
<rect x="290.0" y="697.8" width="4" height="4.7" fill="url(#gR4)" stroke="#f07a5c" stroke-width="1"/>
<text x="54.6" y="713.7" font-size="8.5" letter-spacing="-0.6" fill="#000">0</text>
<text x="64.6" y="713.7" font-size="8.5" letter-spacing="-0.6" fill="#000">1</text>
<text x="74.6" y="713.7" font-size="8.5" letter-spacing="-0.6" fill="#000">2</text>
<text x="84.6" y="713.7" font-size="8.5" letter-spacing="-0.6" fill="#000">3</text>
<text x="94.6" y="713.7" font-size="8.5" letter-spacing="-0.6" fill="#000">4</text>
<text x="104.6" y="713.7" font-size="8.5" letter-spacing="-0.6" fill="#000">5</text>
<text x="114.6" y="713.7" font-size="8.5" letter-spacing="-0.6" fill="#000">6</text>
<text x="124.6" y="713.7" font-size="8.5" letter-spacing="-0.6" fill="#000">7</text>
<text x="134.6" y="713.7" font-size="8.5" letter-spacing="-0.6" fill="#000">8</text>
<text x="144.6" y="713.7" font-size="8.5" letter-spacing="-0.6" fill="#000">9</text>
<text x="154.6" y="713.7" font-size="8.5" letter-spacing="-0.6" fill="#000">10</text>
<text x="164.6" y="713.7" font-size="8.5" letter-spacing="-0.6" fill="#000">11</text>
<text x="174.6" y="713.7" font-size="8.5" letter-spacing="-0.6" fill="#000">12</text>
<text x="184.6" y="713.7" font-size="8.5" letter-spacing="-0.6" fill="#000">13</text>
<text x="194.6" y="713.7" font-size="8.5" letter-spacing="-0.6" fill="#000">14</text>
<text x="204.6" y="713.7" font-size="8.5" letter-spacing="-0.6" fill="#000">15</text>
<text x="214.6" y="713.7" font-size="8.5" letter-spacing="-0.6" fill="#000">16</text>
<text x="224.6" y="713.7" font-size="8.5" letter-spacing="-0.6" fill="#000">17</text>
<text x="234.6" y="713.7" font-size="8.5" letter-spacing="-0.6" fill="#000">18</text>
<text x="244.6" y="713.7" font-size="8.5" letter-spacing="-0.6" fill="#000">19</text>
<text x="254.6" y="713.7" font-size="8.5" letter-spacing="-0.6" fill="#000">20</text>
<text x="264.6" y="713.7" font-size="8.5" letter-spacing="-0.6" fill="#000">21</text>
<text x="274.6" y="713.7" font-size="8.5" letter-spacing="-0.6" fill="#000">22</text>
<text x="284.6" y="713.7" font-size="8.5" letter-spacing="-0.6" fill="#000">23</text>
</svg>
<div style="position:absolute;left:329px;top:620px;width:287px;height:49px;border-radius:7px;background:#4802b2"></div>
<div style="position:absolute;left:341px;top:620px;height:49px;line-height:51px;font-size:19px;font-weight:bold;color:#fff;letter-spacing:-0.35px;-webkit-text-stroke:0.5px #fff;white-space:nowrap">"UNIQUE MODE" BACK-TEST</div>
<div style="position:absolute;left:634px;top:606px;line-height:20px;font-size:16px;font-weight:normal;-webkit-text-stroke:0.8px #0a0a0a;color:#0a0a0a;letter-spacing:1.45px;white-space:nowrap">2013-2023</div>
<div style="position:absolute;left:634px;top:626px;width:88px;height:2.5px;background:#46237e"></div>
<div style="position:absolute;left:634px;top:640px;line-height:20px;font-size:16px;font-weight:normal;-webkit-text-stroke:0.8px #0a0a0a;color:#0a0a0a;letter-spacing:0.55px;white-space:nowrap">100% Dukascopy real ticks data</div>
<div style="position:absolute;left:634px;top:659px;width:248px;height:2px;background:#2c1356"></div>
<svg width="960" height="720" style="position:absolute;left:0;top:0">
<defs><clipPath id="cc"><circle cx="919" cy="646.6" r="14.7"/></clipPath></defs>
<circle cx="919" cy="646.6" r="14.7" fill="#4802b2"/>
<g clip-path="url(#cc)">
<path d="M913.9 645 L913.8 639.5 Q915.2 637.6 916.6 639.5 L916.9 642.5 Q918.5 641.6 920 642.6 Q921.8 642.3 923 643.4 Q925 643.2 926.6 644.8 L927.6 647.5 L927 652.5 Q926 656.5 923.5 657.5 L917 657.5 Q913.5 655 912.6 651 L912.3 647.5 Q912.8 645.5 913.9 645 Z" fill="#e4e2f6" stroke="#27307e" stroke-width="0.9"/>
<path d="M916.8 642.8 L916.8 647.5 M916.8 644.5 Q919 643.6 921 645.2 Q923.5 644.6 926.8 646.4" fill="none" stroke="#4a6cc8" stroke-width="1.1"/>
<path d="M919.5 650.6 L923.6 650.2" stroke="#b9b0d8" stroke-width="0.8"/>
<rect x="915.5" y="657.3" width="9.5" height="2" fill="#1d2260"/>
<rect x="916" y="659.3" width="9" height="4" fill="#e8ecfb"/>
<circle cx="915.2" cy="636.3" r="0.6" fill="#c8d0f5"/>
<path d="M914.3 641 L914.1 651" stroke="#1d2260" stroke-width="0.9"/>
</g>
</svg>
</body></html>
